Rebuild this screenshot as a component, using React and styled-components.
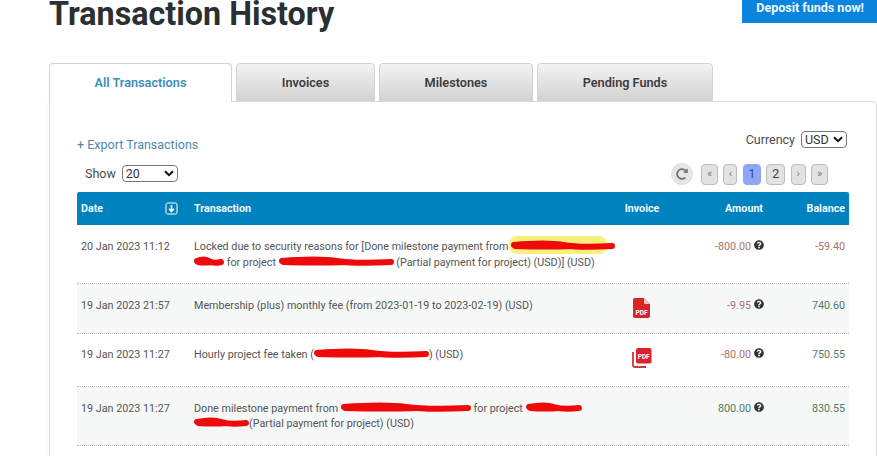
import React from 'react';
import styled, { createGlobalStyle } from 'styled-components';
import { FaQuestionCircle, FaRedoAlt } from 'react-icons/fa';

const GlobalStyle = createGlobalStyle`
  html, body {
    margin: 0;
    padding: 0;
    background: #fff;
    overflow: hidden;
    font-family: Roboto, "Liberation Sans", sans-serif;
  }
`;

const Page = styled.div`
  width: 877px;
  height: 456px;
  overflow: hidden;
  padding-left: 49px;
  box-sizing: border-box;
`;
const TopBar = styled.div`
  display: flex;
  justify-content: space-between;
  align-items: flex-start;
  height: 63px;
`;
const Title = styled.h1`
  margin: 0;
  font-size: 32.3px;
  line-height: 28px;
  font-weight: 700;
  color: #2b2f31;
`;
const DepositButton = styled.div`
  width: 135px;
  height: 23px;
  box-sizing: border-box;
  padding: 0 13px 4px 0;
  background: #0a84dc;
  color: #eef7ff;
  font-size: 12.5px;
  font-weight: 700;
  line-height: 15px;
  text-align: right;
`;
const Tabs = styled.div`
  display: flex;
  gap: 4px;
  height: 39px;
  position: relative;
  z-index: 1;
`;
const Tab = styled.div`
  width: ${(p) => p.$width}px;
  height: ${(p) => (p.$active ? 39 : 38)}px;
  box-sizing: border-box;
  border: 1px solid #d2d2d2;
  border-bottom: ${(p) => (p.$active ? 'none' : '1px solid #d2d2d2')};
  border-radius: 4px 4px 0 0;
  background: ${(p) => (p.$active ? '#fff' : 'linear-gradient(#f3f3f3, #d2d2d2)')};
  color: ${(p) => (p.$active ? '#3b8fb8' : '#3c3c3c')};
  font-size: 12.7px;
  font-weight: 600;
  text-align: center;
  line-height: 37px;
`;
const Card = styled.div`
  width: 828px;
  height: 360px;
  margin-top: -1px;
  box-sizing: border-box;
  border: 1px solid #dcdcdc;
  border-radius: 0 4px 0 0;
  box-shadow: -2px 0 4px rgba(0, 0, 0, 0.03);
  padding: 29px 28px 0 27px;
`;
const ToolRow = styled.div`
  display: flex;
  justify-content: space-between;
  align-items: flex-start;
`;
const ExportRow = styled(ToolRow)`
  height: 26px;
  padding-right: 1px;
`;
const ExportLink = styled.a`
  color: #4f86ae;
  font-size: 12.5px;
  line-height: 15px;
  padding-top: 6px;
`;
const FieldLabel = styled.label`
  display: flex;
  align-items: center;
  gap: ${(p) => p.$gap}px;
  color: #4a4a4a;
  font-size: 12.5px;
  padding-top: ${(p) => p.$top || 0}px;
`;
const FakeSelect = styled.div`
  width: ${(p) => p.$width}px;
  height: 17px;
  box-sizing: border-box;
  border: 1px solid #777;
  border-radius: 4px;
  padding: 0 3px;
  display: flex;
  justify-content: space-between;
  align-items: center;
  color: #333;
  font-size: 12.5px;
`;
const PagerRow = styled(ToolRow)`
  height: 32px;
  margin-top: 3px;
  padding: 0 20px 0 8px;
`;
const Pager = styled.div`
  display: flex;
  align-items: center;
  gap: 5.4px;
  padding-top: 3px;
`;
const RefreshButton = styled.div`
  width: 22px;
  height: 22px;
  border-radius: 50%;
  background: #e6e6e6;
  border: 1px solid #ddd;
  box-sizing: border-box;
  display: flex;
  align-items: center;
  justify-content: center;
  color: #777;
  font-size: 12px;
  margin-right: 2.6px;
`;
const PageButton = styled.div`
  width: ${(p) => p.$width}px;
  height: 21px;
  box-sizing: border-box;
  border: 1px solid ${(p) => (p.$active ? '#8ea6f5' : '#bcbcbc')};
  border-radius: 4px;
  background: ${(p) => (p.$active ? '#8ea6f5' : '#e2e2e2')};
  color: ${(p) => (p.$active ? '#33508c' : p.$big ? '#444' : '#777')};
  font-size: ${(p) => (p.$big ? 13 : 11)}px;
  line-height: 18px;
  text-align: center;
`;
const Grid = styled.div`
  display: grid;
  grid-template-columns: 113px 422px 60px 95px 82px;
  width: 772px;
`;
const HeadRow = styled(Grid)`
  height: 33px;
  align-items: center;
  background: #0082bf;
  border-radius: 2px 2px 0 0;
  color: #f0faff;
  font-size: 10.7px;
  font-weight: 700;
`;
const Row = styled(Grid)`
  height: ${(p) => p.$height}px;
  box-sizing: border-box;
  border-bottom: 1px dotted #b9b9b9;
  background: ${(p) => (p.$shaded ? '#f6f7f7' : '#fff')};
  color: #555;
  font-size: 10.75px;
  line-height: ${(p) => p.$leading}px;
`;
const Cell = styled.div`
  padding: ${(p) => p.$top}px ${(p) => p.$right ?? 4}px 0 4px;
  text-align: ${(p) => p.$align || 'left'};
  white-space: nowrap;
`;
const HeadCell = styled.div`
  padding: 0 4px;
  display: flex;
  align-items: center;
  justify-content: ${(p) => p.$justify || 'flex-start'};
`;
const SortIcon = styled.svg`
  width: 13px;
  height: 13px;
  margin-left: auto;
  margin-right: 8px;
`;
const Amount = styled.span`
  color: ${(p) => (p.$negative ? '#a7736a' : '#4f7b60')};
`;
const HelpIcon = styled(FaQuestionCircle)`
  color: #333;
  font-size: 10px;
  margin-left: 3px;
  vertical-align: 0;
`;
const Scribble = styled.svg`
  display: inline-block;
  width: ${(p) => p.width}px;
  height: 14px;
  vertical-align: -3px;
  overflow: visible;
`;
const PdfWrap = styled.div`
  padding: 14px 0 0 ${(p) => p.$left}px;
`;

function Redaction({ width, highlight }) {
  return (
    <Scribble width={width} viewBox={`0 0 ${width} 14`}>
      {highlight && <rect x="-2" y="-3" width={width - 6} height="18" rx="8" fill="#f7f17c" />}
      <path
        d={`M3 6 Q${width / 3} 3 ${width / 2} 6 T${width - 3} 7`}
        stroke="#ee0a0a"
        strokeWidth="6"
        strokeLinecap="round"
        fill="none"
      />
      <path
        d={`M4 8 Q${width / 3} 9 ${width * 0.6} 8 T${width - 12} 8`}
        stroke="#ee0a0a"
        strokeWidth="4"
        strokeLinecap="round"
        fill="none"
      />
    </Scribble>
  );
}

function PdfIcon() {
  return (
    <svg width="18" height="20" viewBox="0 0 18 20">
      <path d="M2 0 H11 L17 6 V18 a2 2 0 0 1 -2 2 H2 a2 2 0 0 1 -2 -2 V2 a2 2 0 0 1 2 -2 Z" fill="#d8232a" />
      <path d="M11 0 L17 6 H12 a1 1 0 0 1 -1 -1 Z" fill="#f6c9c9" />
      <text x="8.5" y="17" fontSize="6.5" fontWeight="700" fontFamily="Roboto" fill="#fff" textAnchor="middle">PDF</text>
    </svg>
  );
}

function PdfStackIcon() {
  return (
    <svg width="20" height="20" viewBox="0 0 20 20">
      <path d="M1 4 V17 a2 2 0 0 0 2 2 H14" stroke="#c9383c" strokeWidth="1.8" fill="none" />
      <rect x="4" y="0" width="15.5" height="15.5" rx="2" fill="#d8232a" />
      <text x="11.7" y="10.5" fontSize="6.5" fontWeight="700" fontFamily="Roboto" fill="#fff" textAnchor="middle">PDF</text>
    </svg>
  );
}

function Chevron() {
  return (
    <svg width="10" height="7" viewBox="0 0 10 7">
      <path d="M1 1.2 L5 5.2 L9 1.2" stroke="#111" strokeWidth="2" fill="none" />
    </svg>
  );
}

const pages = [
  { label: '«', width: 17 },
  { label: '‹', width: 14 },
  { label: '1', width: 18, active: true, big: true },
  { label: '2', width: 19, big: true },
  { label: '›', width: 15 },
  { label: '»', width: 17 },
];

const rows = [
  {
    height: 59,
    top: 14,
    leading: 16,
    date: '20 Jan 2023 11:12',
    amount: '-800.00',
    balance: '-59.40',
    negative: true,
    balanceNegative: true,
    text: (
      <>
        Locked due to security reasons for [Done milestone payment from <Redaction width={104} highlight />
        <br />
        <Redaction width={30} /> for project <Redaction width={115} /> (Partial payment for project) (USD)] (USD)
      </>
    ),
  },
  {
    height: 50,
    top: 14,
    leading: 15,
    shaded: true,
    date: '19 Jan 2023 21:57',
    amount: '-9.95',
    balance: '740.60',
    negative: true,
    text: 'Membership (plus) monthly fee (from 2023-01-19 to 2023-02-19) (USD)',
    pdf: <PdfWrap $left={21}><PdfIcon /></PdfWrap>,
  },
  {
    height: 53,
    top: 13,
    leading: 15,
    date: '19 Jan 2023 11:27',
    amount: '-80.00',
    balance: '750.55',
    negative: true,
    text: (
      <>
        Hourly project fee taken (<Redaction width={115} />) (USD)
      </>
    ),
    pdf: <PdfWrap $left={20}><PdfStackIcon /></PdfWrap>,
  },
  {
    height: 59,
    top: 14,
    leading: 15,
    shaded: true,
    date: '19 Jan 2023 11:27',
    amount: '800.00',
    balance: '830.55',
    text: (
      <>
        Done milestone payment from <Redaction width={130} /> for project <Redaction width={56} />
        <br />
        <Redaction width={55} />(Partial payment for project) (USD)
      </>
    ),
  },
];

const App = () => (
  <Page>
    <GlobalStyle />
    <TopBar>
      <Title>Transaction History</Title>
      <DepositButton>Deposit funds now!</DepositButton>
    </TopBar>
    <Tabs>
      <Tab $width={183} $active>All Transactions</Tab>
      <Tab $width={139}>Invoices</Tab>
      <Tab $width={154}>Milestones</Tab>
      <Tab $width={176}>Pending Funds</Tab>
    </Tabs>
    <Card>
      <ExportRow>
        <ExportLink>+ Export Transactions</ExportLink>
        <FieldLabel $gap={6}>
          Currency
          <FakeSelect $width={46}>USD <Chevron /></FakeSelect>
        </FieldLabel>
      </ExportRow>
      <PagerRow>
        <FieldLabel $gap={6} $top={5}>
          Show
          <FakeSelect $width={56}>20 <Chevron /></FakeSelect>
        </FieldLabel>
        <Pager>
          <RefreshButton><FaRedoAlt /></RefreshButton>
          {pages.map((page) => (
            <PageButton key={page.label} $width={page.width} $active={page.active} $big={page.big}>
              {page.label}
            </PageButton>
          ))}
        </Pager>
      </PagerRow>
      <HeadRow>
        <HeadCell>
          Date
          <SortIcon viewBox="0 0 13 13">
            <rect x="1" y="1" width="11" height="11" rx="1.5" fill="none" stroke="#fff" strokeWidth="1" />
            <path d="M6.5 3 V9 M4 6.8 L6.5 9.5 L9 6.8" stroke="#fff" strokeWidth="1.6" fill="none" />
          </SortIcon>
        </HeadCell>
        <HeadCell>Transaction</HeadCell>
        <HeadCell $justify="center">Invoice</HeadCell>
        <HeadCell $justify="flex-end">Amount</HeadCell>
        <HeadCell $justify="flex-end">Balance</HeadCell>
      </HeadRow>
      {rows.map((row, index) => (
        <Row key={index} $height={row.height} $shaded={row.shaded} $leading={row.leading}>
          <Cell $top={row.top}>{row.date}</Cell>
          <Cell $top={row.top}>{row.text}</Cell>
          {row.pdf || <div />}
          <Cell $top={row.top} $align="right" $right={3}>
            <Amount $negative={row.negative}>{row.amount}</Amount>
            <HelpIcon />
          </Cell>
          <Cell $top={row.top} $align="right">
            <Amount $negative={row.balanceNegative}>{row.balance}</Amount>
          </Cell>
        </Row>
      ))}
    </Card>
  </Page>
);

export default App;
